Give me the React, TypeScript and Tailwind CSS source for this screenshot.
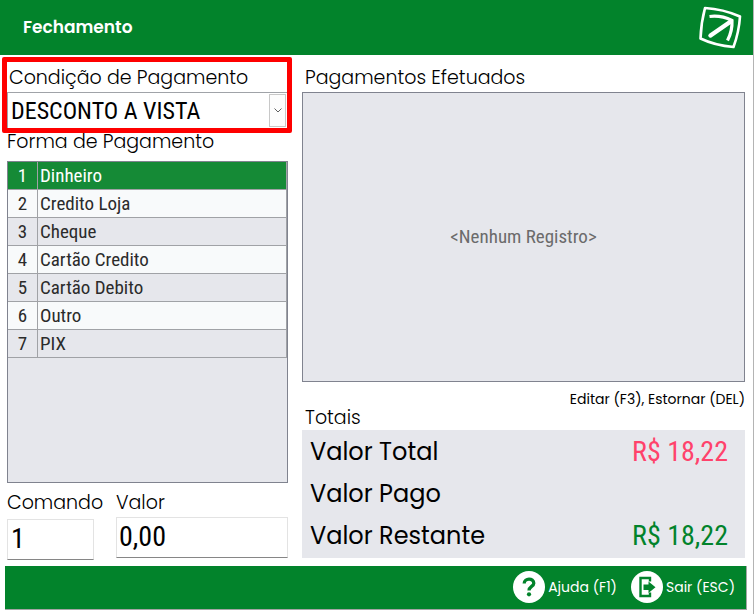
import { useState } from 'react'
import clsx from 'clsx'

const formas = [
  'Dinheiro',
  'Credito Loja',
  'Cheque',
  'Cartão Credito',
  'Cartão Debito',
  'Outro',
  'PIX',
]

const totais = [
  { label: 'Valor Total', valor: 'R$ 18,22', cor: 'text-[#ff426b]' },
  { label: 'Valor Pago', valor: '', cor: 'text-black' },
  { label: 'Valor Restante', valor: 'R$ 18,22', cor: 'text-[#02832b]' },
]

const condensed =
  "font-['Roboto_Condensed','Liberation_Sans_Narrow','Roboto',sans-serif] font-normal"

function Logo() {
  return (
    <svg viewBox="0 0 46 46" className="h-[46px] w-[46px]" fill="none" stroke="white">
      <path
        d="M8 3Q26 4 43 11.500Q42 27 36.500 42Q18 40.500 3.500 33.500Q4 18 8 3Z"
        strokeWidth="2.600"
        strokeLinejoin="round"
      />
      <path d="M13.500 30.500L33 17" strokeWidth="4.500" strokeLinecap="round" />
      <path d="M12.500 11.500Q24 10 35 15.500Q35.500 26 30.500 35.500" strokeWidth="3.200" />
    </svg>
  )
}

function HelpIcon() {
  return (
    <svg viewBox="0 0 32 32" className="h-8 w-8" fill="none">
      <circle cx="16" cy="16" r="16" fill="white" />
      <path
        d="M11.200 12.500C11.200 6.800 20.800 6.800 20.800 12.200C20.800 15.500 16 15.300 16 19.500"
        stroke="#02832b"
        strokeWidth="3.300"
      />
      <circle cx="16" cy="23.300" r="2.100" fill="#02832b" />
    </svg>
  )
}

function ExitIcon() {
  return (
    <svg viewBox="0 0 32 32" className="h-8 w-8" fill="none">
      <circle cx="16" cy="16" r="16" fill="white" />
      <path d="M19 10.500V7H9.500V25H19V21.500" stroke="#02832b" strokeWidth="2.400" />
      <path d="M12.500 13.500H17.500V10.500L24.500 16.200L17.500 22V19H12.500Z" fill="#02832b" />
    </svg>
  )
}

export default function App() {
  const [selecionada, setSelecionada] = useState(0)

  return (
    <div className="flex min-h-screen flex-col border-r border-[#b4b4b4] bg-white font-['Poppins','Inter',sans-serif] text-black">
      <header className="flex h-[55px] items-center justify-between bg-[#02832b] pr-2.5 pl-[23px]">
        <h1 className="text-[17px] font-semibold text-white">Fechamento</h1>
        <Logo />
      </header>

      <main className="grid flex-1 grid-cols-[281fr_443fr] gap-[14px] pr-2 pl-[7px]">
        <section className="flex flex-col">
          <div className="relative">
            <label
              htmlFor="condicao"
              className="flex h-[37px] items-center pt-2 pl-0.5 text-[19px] leading-6 font-light whitespace-nowrap"
            >
              Condição de Pagamento
            </label>
            <div className="relative">
              <select
                id="condicao"
                className={clsx(
                  condensed,
                  'h-[37px] w-full appearance-none border border-[#a0a3a8] bg-white pr-6 pl-[3px] text-2xl'
                )}
              >
                <option>DESCONTO A VISTA</option>
              </select>
              <span className="pointer-events-none absolute inset-y-0.5 right-0.5 flex w-[17px] items-center justify-center border border-[#c8c8c8] bg-[#fdfdfd]">
                <svg viewBox="0 0 8 5" className="h-[5px] w-2" fill="none" stroke="#606060">
                  <path d="M0.500 0.500L4 4L7.500 0.500" />
                </svg>
              </span>
            </div>
            <div className="pointer-events-none absolute top-0.5 -right-1 -bottom-1 -left-[5px] z-10 rounded-xs border-5 border-[#fe0000]" />
          </div>

          <h2 className="h-8 text-[19px] leading-[26px] font-light whitespace-nowrap">
            Forma de Pagamento
          </h2>
          <div className="flex-1 border border-[#80838f] bg-[#e6e7ec]">
            <table
              className={clsx(
                condensed,
                'w-full border-separate border-spacing-0 text-[19px] leading-6 text-[#2b2b2b]'
              )}
            >
              <tbody>
                {formas.map((forma, i) => (
                  <tr
                    key={forma}
                    onClick={() => setSelecionada(i)}
                    className={clsx(
                      'h-7',
                      i === selecionada
                        ? 'bg-[#158a36] text-white'
                        : i % 2
                          ? 'bg-[#f8fafb]'
                          : 'bg-[#e6e7ec]'
                    )}
                  >
                    <td className="w-[30px] border-r border-b border-[#a0a2a6] p-0 text-center">
                      {i + 1}
                    </td>
                    <td className="border-r border-b border-[#a0a2a6] p-0 pl-0.5">{forma}</td>
                  </tr>
                ))}
              </tbody>
            </table>
          </div>

          <div className="grid grid-cols-[minmax(0,87fr)_minmax(0,172fr)] gap-[22px] pb-1.5">
            <div>
              <label
                htmlFor="comando"
                className="flex h-9 items-center pt-1 text-[19px] font-light"
              >
                Comando
              </label>
              <input
                id="comando"
                defaultValue="1"
                className={clsx(
                  condensed,
                  'h-[41px] w-full border border-[#e3e3e3] border-b-[#868686] px-[3px] pb-0.5 text-[28px]'
                )}
              />
            </div>
            <div>
              <label
                htmlFor="valor"
                className="flex h-[34px] items-center pt-1.5 text-[19px] font-light"
              >
                Valor
              </label>
              <input
                id="valor"
                defaultValue="0,00"
                className={clsx(
                  condensed,
                  'h-[41px] w-full border border-[#e3e3e3] border-b-[#868686] px-0.5 pb-0.5 text-[28px]'
                )}
              />
            </div>
          </div>
        </section>

        <section className="flex flex-col pb-2">
          <h2 className="flex h-[37px] items-center pt-2 pl-[3px] text-[19px] leading-6 font-light">
            Pagamentos Efetuados
          </h2>
          <div
            className={clsx(
              condensed,
              'flex flex-1 items-center justify-center border border-[#80838f] bg-[#e6e7ec] text-[19px] text-[#6b6b6b]'
            )}
          >
            &lt;Nenhum Registro&gt;
          </div>
          <p className="pt-2 text-right text-sm leading-[18px]">Editar (F3), Estornar (DEL)</p>
          <h2 className="h-[22px] pl-[3px] text-[19px] leading-5 font-light">Totais</h2>
          <dl className="flex h-32 flex-col justify-between bg-[#e6e7ec] py-1 pr-[17px] pl-2">
            {totais.map(({ label, valor, cor }) => (
              <div key={label} className="flex h-9 items-center justify-between">
                <dt className="text-2xl">{label}</dt>
                <dd className={clsx(condensed, cor, 'text-[28px]')}>{valor}</dd>
              </div>
            ))}
          </dl>
        </section>
      </main>

      <footer className="mr-1.5 mb-1 ml-[5px] flex h-11 items-center justify-end gap-[14px] border-r border-b border-[#a5a5a5] bg-[#02832b] pr-[11px] pb-0.5 text-sm text-white">
        <button type="button" className="flex items-center gap-[3px]">
          <HelpIcon />
          Ajuda (F1)
        </button>
        <button type="button" className="flex items-center gap-[3px]">
          <ExitIcon />
          Sair (ESC)
        </button>
      </footer>
    </div>
  )
}
